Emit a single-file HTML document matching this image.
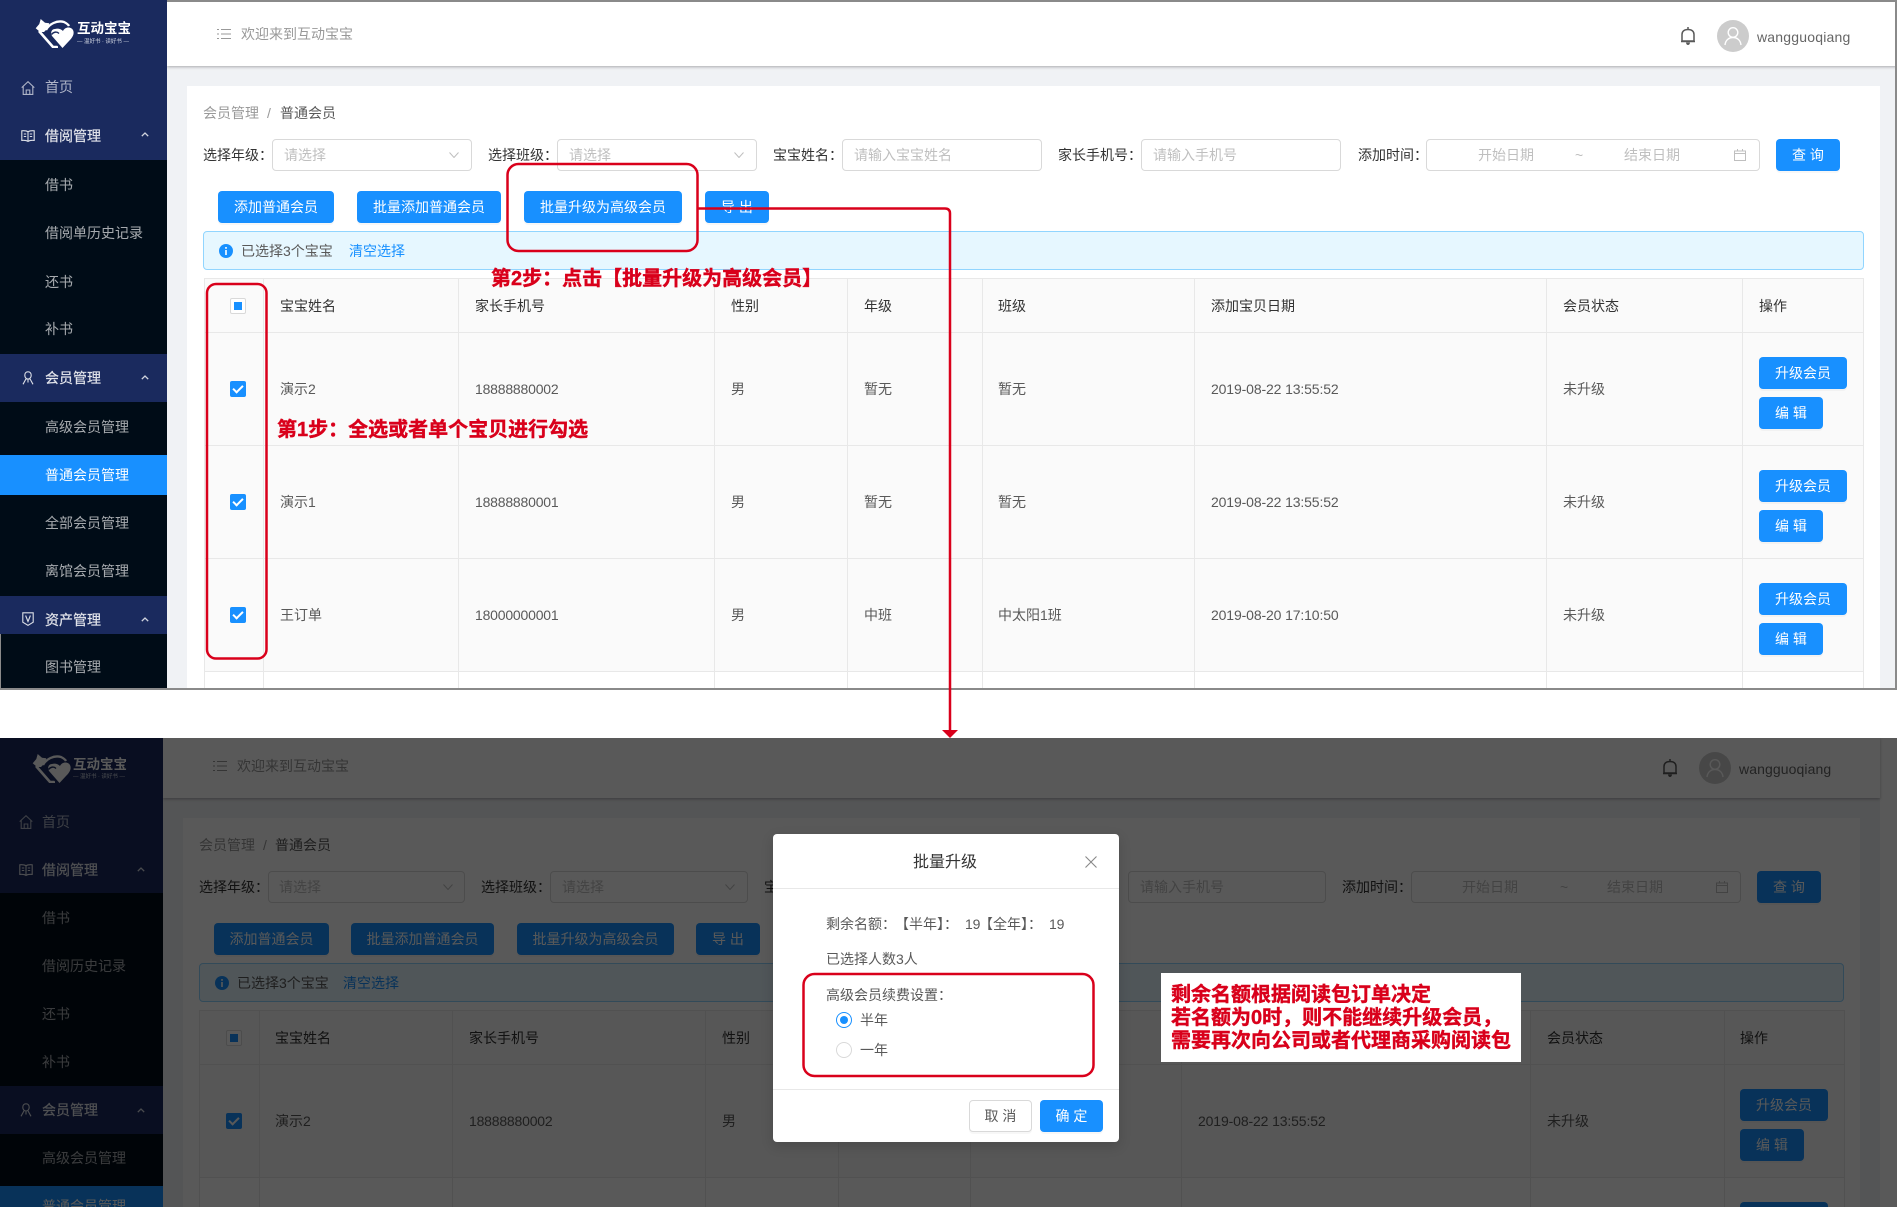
<!DOCTYPE html>
<html lang="zh">
<head>
<meta charset="utf-8">
<title>批量升级</title>
<style>
html,body{margin:0;padding:0;background:#fff}
body{position:relative;width:1897px;height:1207px;overflow:hidden;font:14px/20px "Liberation Sans","Noto Sans CJK SC",sans-serif;color:#595959}
.s{position:absolute;overflow:hidden;left:0;width:1897px}
.i{position:absolute;left:0;width:1897px;height:1207px}
.a{position:absolute}
.t{position:absolute;white-space:nowrap;line-height:20px;font-size:14px}
.m{color:rgba(255,255,255,.65)}
.w{color:rgba(255,255,255,.85);-webkit-text-stroke:.2px rgba(255,255,255,.85)}
.d{color:#333}
.g{color:#bfbfbf}
.n{color:#999}
.l{color:#1890ff}
.x{letter-spacing:-.2px}
.y{letter-spacing:-.13px}
.b{position:absolute;height:32px;line-height:32px;background:#1890ff;color:#fff;border-radius:4px;text-align:center;font-size:14px;white-space:nowrap;box-shadow:0 2px 0 rgba(0,0,0,.03)}
.f{position:absolute;height:30px;border:1px solid #d9d9d9;border-radius:4px;background:#fff}
.v{position:absolute;width:1px;background:#e8e8e8}
.h{position:absolute;height:1px;background:#e8e8e8}
.c{position:absolute;width:16px;height:16px;background:#1890ff;border-radius:2px}
.c:after{content:"";position:absolute;left:5px;top:2px;width:4px;height:8px;border:solid #fff;border-width:0 2px 2px 0;transform:rotate(45deg)}
.q{position:absolute;width:14px;height:14px;border:1px solid #d9d9d9;border-radius:2px;background:#fff}
.q:after{content:"";position:absolute;left:3px;top:3px;width:8px;height:8px;background:#1890ff}
.r{position:absolute;color:#d9001b;font-weight:700;font-size:20px;line-height:23px;white-space:nowrap;-webkit-text-stroke:.4px #d9001b}
svg{position:absolute;overflow:visible}
.ic{fill:none;stroke:currentColor;stroke-width:1.1}
</style>
</head>
<body>
<svg width="0" height="0" style="left:0;top:0">
<symbol id="logo" viewBox="0 0 41 31"><path fill="#fff" d="M.7 11.300 4.300 7 5.700 2 10 5.700l4.300.6L13 11 9 15 5 15Z"/><path fill="none" stroke="#fff" stroke-width="2.300" d="M11 13C14 7 22 3 29 5c2 1 4 2 5 4"/><path fill="none" stroke="#fff" stroke-width="2.600" d="M4 14 18 30h5"/><path fill="#fff" d="M28 14C30 9.500 36 9.500 38 13c2 4-1 8-4 11l-6.500 7L17 19c-2-4 0-7 3-7 3-1 6 0 8 2Z"/><path fill="none" stroke="#1a2a5e" stroke-width="1.400" d="M16.500 17.500c2.500-3 5.500-3 7.500-1M18 23l6 6.500"/></symbol>
<symbol id="home" viewBox="0 0 14 14"><path class="ic" d="M.7 6.600 7 .7l6.300 5.900M2.200 5.400v8h9.600v-8M5.200 13.400V9h3.600v4.400"/></symbol>
<symbol id="book" viewBox="0 0 14 14"><path class="ic" d="M7 2.800C5.400 1.700 3 1.600.8 1.800v9.600c2.200-.2 4.600-.1 6.200 1 1.600-1.100 4-1.200 6.200-1V1.800C11 1.600 8.600 1.700 7 2.800ZM7 2.800v9.600M2.800 5h2.400M2.800 7.500h2.400M8.800 5h2.400M8.800 7.500h2.400"/></symbol>
<symbol id="user" viewBox="0 0 14 14"><path class="ic" d="M7 .8c2 0 3.200 1.500 3.200 3.400S9 8 7 8 3.800 6.100 3.800 4.200 5 .8 7 .8ZM5.200 7.500 2 13.300M8.800 7.500l3.200 5.800M7 8v3.500"/></symbol>
<symbol id="shield" viewBox="0 0 14 14"><path class="ic" d="M1.800.8h10.400v9.400L7 13.300 1.800 10.200ZM4.600 3.500 7 9.500l2.400-6"/></symbol>
<symbol id="up" viewBox="0 0 10 6"><path fill="none" stroke="currentColor" stroke-width="1.600" d="M1 5 5 1.200 9 5"/></symbol>
<symbol id="down" viewBox="0 0 10 6"><path fill="none" stroke="currentColor" stroke-width="1" d="M.5.500 5 5.500 9.500.500"/></symbol>
<symbol id="list" viewBox="0 0 14 14"><path fill="none" stroke="currentColor" stroke-width="1.100" d="M0 2.500h2M4 2.500h10M0 7h2M4 7h10M0 11.500h2M4 11.500h10"/></symbol>
<symbol id="bell" viewBox="0 0 14 18"><path fill="none" stroke="currentColor" stroke-width="1.500" d="M1 14V7.500C1 4.200 3.500 2.500 7 2.500S13 4.200 13 7.500V14ZM0 14.500h14M7 0v2.500"/><path fill="currentColor" d="M5 15.500h4C9 17 8 18 7 18S5 17 5 15.500Z"/></symbol>
<symbol id="cal" viewBox="0 0 12 12"><path fill="none" stroke="currentColor" stroke-width="1" d="M.5 2h11v9.500H.5ZM.5 4.500h11M3.500 0v2.500M8.500 0v2.500"/></symbol>
<symbol id="info" viewBox="0 0 14 14"><circle cx="7" cy="7" r="7" fill="#1890ff"/><rect x="6.200" y="6" width="1.600" height="5" fill="#fff"/><rect x="6.200" y="3" width="1.600" height="1.800" fill="#fff"/></symbol>
<symbol id="avatar" viewBox="0 0 32 32"><circle cx="16" cy="16" r="16" fill="#ccc"/><circle cx="16" cy="12.500" r="4.800" fill="none" stroke="#fff" stroke-width="1.400"/><path fill="none" stroke="#fff" stroke-width="1.400" d="M8 25c.5-5 4-7.500 8-7.500s7.500 2.500 8 7.500"/></symbol>
</svg>

<!-- TOP SCREEN -->
<div class="s" style="top:0;height:690px;background:#f0f2f5">
<div class="i" style="top:0">
<div class="a" style="left:167px;top:0;width:1730px;height:66px;background:#fff;box-shadow:0 1px 3px rgba(0,0,0,.3)"></div>
<div class="a" style="left:187px;top:86px;width:1693px;height:604px;background:#fff"></div>

<svg style="left:217px;top:27px;color:#999" width="14" height="14"><use href="#list"/></svg>
<div class="t n" style="left:241px;top:24px">欢迎来到互动宝宝</div>
<svg style="left:1681px;top:27px;color:#595959" width="14" height="18"><use href="#bell"/></svg>
<svg style="left:1717px;top:20px" width="32" height="32"><use href="#avatar"/></svg>
<div class="t" style="left:1757px;top:27px;letter-spacing:.2px;color:#666">wangguoqiang</div>

<!-- sidebar -->
<div class="a" style="left:0;top:0;width:167px;height:690px;background:#1a2a5e"></div>
<div class="a" style="left:0;top:160px;width:167px;height:194px;background:#000c17"></div>
<div class="a" style="left:0;top:402px;width:167px;height:194px;background:#000c17"></div>
<div class="a" style="left:0;top:455px;width:167px;height:40px;background:#1890ff"></div>
<div class="a" style="left:0;top:634px;width:167px;height:56px;background:#000c17"></div>
<svg style="left:35px;top:17px" width="41" height="31"><use href="#logo"/></svg>
<div class="t" style="left:77px;top:19px;color:#fff;font-size:13.500px;font-weight:700">互动宝宝</div>
<div class="t" style="left:77px;top:32px;color:#cfd4e0;font-size:5.500px">— 温好书 · 读好书 —</div>
<svg style="left:21px;top:81px;color:rgba(255,255,255,.65)" width="14" height="14"><use href="#home"/></svg>
<svg style="left:21px;top:129px;color:rgba(255,255,255,.85)" width="14" height="14"><use href="#book"/></svg>
<svg style="left:21px;top:371px;color:rgba(255,255,255,.85)" width="14" height="14"><use href="#user"/></svg>
<svg style="left:21px;top:612px;color:rgba(255,255,255,.85)" width="14" height="14"><use href="#shield"/></svg>
<svg style="left:141px;top:132px;color:rgba(255,255,255,.8)" width="8" height="5"><use href="#up"/></svg>
<svg style="left:141px;top:375px;color:rgba(255,255,255,.8)" width="8" height="5"><use href="#up"/></svg>
<svg style="left:141px;top:617px;color:rgba(255,255,255,.8)" width="8" height="5"><use href="#up"/></svg>
<div class="t m" style="left:45px;top:77px">首页</div>
<div class="t w" style="left:45px;top:126px">借阅管理</div>
<div class="t m" style="left:45px;top:175px">借书</div>
<div class="t m" style="left:45px;top:223px">借阅单历史记录</div>
<div class="t m" style="left:45px;top:272px">还书</div>
<div class="t m" style="left:45px;top:319px">补书</div>
<div class="t w" style="left:45px;top:368px">会员管理</div>
<div class="t m" style="left:45px;top:417px">高级会员管理</div>
<div class="t" style="left:45px;top:465px;color:#fff">普通会员管理</div>
<div class="t m" style="left:45px;top:513px">全部会员管理</div>
<div class="t m" style="left:45px;top:561px">离馆会员管理</div>
<div class="t w" style="left:45px;top:610px">资产管理</div>
<div class="t m" style="left:45px;top:657px">图书管理</div>

<!-- filters -->
<div class="t n" style="left:203px;top:103px">会员管理</div>
<div class="t n" style="left:267px;top:103px">/</div>
<div class="t" style="left:280px;top:103px">普通会员</div>
<div class="t d" style="left:203px;top:145px">选择年级：</div>
<div class="f" style="left:272px;top:139px;width:198px"></div>
<div class="t g" style="left:284px;top:145px">请选择</div>
<svg style="left:449px;top:152px;color:#bfbfbf" width="10" height="6"><use href="#down"/></svg>
<div class="t d" style="left:488px;top:145px">选择班级：</div>
<div class="f" style="left:557px;top:139px;width:198px"></div>
<div class="t g" style="left:569px;top:145px">请选择</div>
<svg style="left:734px;top:152px;color:#bfbfbf" width="10" height="6"><use href="#down"/></svg>
<div class="t d" style="left:773px;top:145px">宝宝姓名：</div>
<div class="f" style="left:842px;top:139px;width:198px"></div>
<div class="t g" style="left:854px;top:145px">请输入宝宝姓名</div>
<div class="t d" style="left:1058px;top:145px">家长手机号：</div>
<div class="f" style="left:1141px;top:139px;width:198px"></div>
<div class="t g" style="left:1153px;top:145px">请输入手机号</div>
<div class="t d" style="left:1358px;top:145px">添加时间：</div>
<div class="f" style="left:1426px;top:139px;width:332px"></div>
<div class="t g" style="left:1478px;top:145px">开始日期</div>
<div class="t g" style="left:1575px;top:145px">~</div>
<div class="t g" style="left:1624px;top:145px">结束日期</div>
<svg style="left:1734px;top:149px;color:#bfbfbf" width="12" height="12"><use href="#cal"/></svg>
<div class="b" style="left:1776px;top:139px;width:64px">查 询</div>

<div class="b" style="left:218px;top:191px;width:116px">添加普通会员</div>
<div class="b" style="left:357px;top:191px;width:144px">批量添加普通会员</div>
<div class="b" style="left:524px;top:191px;width:158px">批量升级为高级会员</div>
<div class="b" style="left:705px;top:191px;width:64px">导 出</div>

<div class="a" style="left:203px;top:231px;width:1659px;height:37px;background:#e6f7ff;border:1px solid #91d5ff;border-radius:4px"></div>
<svg style="left:219px;top:244px" width="14" height="14"><use href="#info"/></svg>
<div class="t" style="left:241px;top:241px">已选择3个宝宝</div>
<div class="t l" style="left:349px;top:241px">清空选择</div>

<!-- table -->
<div class="a" style="left:204px;top:278px;width:1660px;height:393px;background:#fafafa"></div>
<div class="h" style="left:204px;top:278px;width:1660px"></div>
<div class="h" style="left:204px;top:332px;width:1660px"></div>
<div class="h" style="left:204px;top:445px;width:1660px"></div>
<div class="h" style="left:204px;top:558px;width:1660px"></div>
<div class="h" style="left:204px;top:671px;width:1660px"></div>
<div class="v" style="left:204px;top:278px;height:412px"></div>
<div class="v" style="left:263px;top:278px;height:412px"></div>
<div class="v" style="left:458px;top:278px;height:412px"></div>
<div class="v" style="left:714px;top:278px;height:412px"></div>
<div class="v" style="left:847px;top:278px;height:412px"></div>
<div class="v" style="left:982px;top:278px;height:412px"></div>
<div class="v" style="left:1194px;top:278px;height:412px"></div>
<div class="v" style="left:1546px;top:278px;height:412px"></div>
<div class="v" style="left:1742px;top:278px;height:412px"></div>
<div class="v" style="left:1863px;top:278px;height:412px"></div>

<div class="q" style="left:230px;top:298px"></div>
<div class="t d" style="left:280px;top:296px">宝宝姓名</div>
<div class="t d" style="left:475px;top:296px">家长手机号</div>
<div class="t d" style="left:731px;top:296px">性别</div>
<div class="t d" style="left:864px;top:296px">年级</div>
<div class="t d" style="left:998px;top:296px">班级</div>
<div class="t d" style="left:1211px;top:296px">添加宝贝日期</div>
<div class="t d" style="left:1563px;top:296px">会员状态</div>
<div class="t d" style="left:1759px;top:296px">操作</div>

<div class="c" style="left:230px;top:381px"></div>
<div class="t" style="left:280px;top:379px">演示2</div>
<div class="t x" style="left:475px;top:379px">18888880002</div>
<div class="t" style="left:731px;top:379px">男</div>
<div class="t" style="left:864px;top:379px">暂无</div>
<div class="t" style="left:998px;top:379px">暂无</div>
<div class="t y" style="left:1211px;top:379px">2019-08-22 13:55:52</div>
<div class="t" style="left:1563px;top:379px">未升级</div>
<div class="b" style="left:1759px;top:357px;width:88px">升级会员</div>
<div class="b" style="left:1759px;top:397px;width:64px">编 辑</div>

<div class="c" style="left:230px;top:494px"></div>
<div class="t" style="left:280px;top:492px">演示1</div>
<div class="t x" style="left:475px;top:492px">18888880001</div>
<div class="t" style="left:731px;top:492px">男</div>
<div class="t" style="left:864px;top:492px">暂无</div>
<div class="t" style="left:998px;top:492px">暂无</div>
<div class="t y" style="left:1211px;top:492px">2019-08-22 13:55:52</div>
<div class="t" style="left:1563px;top:492px">未升级</div>
<div class="b" style="left:1759px;top:470px;width:88px">升级会员</div>
<div class="b" style="left:1759px;top:510px;width:64px">编 辑</div>

<div class="c" style="left:230px;top:607px"></div>
<div class="t" style="left:280px;top:605px">王订单</div>
<div class="t x" style="left:475px;top:605px">18000000001</div>
<div class="t" style="left:731px;top:605px">男</div>
<div class="t" style="left:864px;top:605px">中班</div>
<div class="t" style="left:998px;top:605px">中太阳1班</div>
<div class="t y" style="left:1211px;top:605px">2019-08-20 17:10:50</div>
<div class="t" style="left:1563px;top:605px">未升级</div>
<div class="b" style="left:1759px;top:583px;width:88px">升级会员</div>
<div class="b" style="left:1759px;top:623px;width:64px">编 辑</div>

<!-- window frame -->
<div class="a" style="left:167px;top:0;width:1730px;height:2px;background:#8a8a8a"></div>
<div class="a" style="left:1895px;top:0;width:2px;height:690px;background:#8a8a8a"></div>
<div class="a" style="left:0;top:688px;width:1897px;height:2px;background:#8a8a8a"></div>
<div class="a" style="left:0;top:634px;width:1px;height:56px;background:#8a8a8a"></div>
</div>
</div>

<!-- BOTTOM SCREEN -->
<div class="s" style="top:738px;height:469px">
<div class="i" style="top:-738px">
<div class="a" style="left:163px;top:738px;width:1717px;height:469px;background:#f0f2f5"></div>
<div class="a" style="left:163px;top:738px;width:1717px;height:60px;background:#fff;box-shadow:0 1px 3px rgba(0,0,0,.3)"></div>
<div class="a" style="left:183px;top:818px;width:1677px;height:389px;background:#fff"></div>

<svg style="left:213px;top:759px;color:#999" width="14" height="14"><use href="#list"/></svg>
<div class="t n" style="left:237px;top:756px">欢迎来到互动宝宝</div>
<svg style="left:1663px;top:759px;color:#595959" width="14" height="18"><use href="#bell"/></svg>
<svg style="left:1699px;top:752px" width="32" height="32"><use href="#avatar"/></svg>
<div class="t" style="left:1739px;top:759px;letter-spacing:.1px;color:#666">wangguoqiang</div>

<div class="a" style="left:0;top:738px;width:163px;height:469px;background:#1a2a5e"></div>
<div class="a" style="left:0;top:893px;width:163px;height:193px;background:#000c17"></div>
<div class="a" style="left:0;top:1134px;width:163px;height:73px;background:#000c17"></div>
<div class="a" style="left:0;top:1186px;width:163px;height:21px;background:#1890ff"></div>
<svg style="left:32px;top:752px" width="41" height="31"><use href="#logo"/></svg>
<div class="t" style="left:73px;top:755px;color:#fff;font-size:13.500px;font-weight:700">互动宝宝</div>
<div class="t" style="left:73px;top:767px;color:#cfd4e0;font-size:5.500px">— 温好书 · 读好书 —</div>
<svg style="left:19px;top:815px;color:rgba(255,255,255,.65)" width="14" height="14"><use href="#home"/></svg>
<svg style="left:19px;top:863px;color:rgba(255,255,255,.85)" width="14" height="14"><use href="#book"/></svg>
<svg style="left:19px;top:1103px;color:rgba(255,255,255,.85)" width="14" height="14"><use href="#user"/></svg>
<svg style="left:137px;top:867px;color:rgba(255,255,255,.8)" width="8" height="5"><use href="#up"/></svg>
<svg style="left:137px;top:1108px;color:rgba(255,255,255,.8)" width="8" height="5"><use href="#up"/></svg>
<div class="t m" style="left:42px;top:812px">首页</div>
<div class="t w" style="left:42px;top:860px">借阅管理</div>
<div class="t m" style="left:42px;top:908px">借书</div>
<div class="t m" style="left:42px;top:956px">借阅历史记录</div>
<div class="t m" style="left:42px;top:1004px">还书</div>
<div class="t m" style="left:42px;top:1052px">补书</div>
<div class="t w" style="left:42px;top:1100px">会员管理</div>
<div class="t m" style="left:42px;top:1148px">高级会员管理</div>
<div class="t" style="left:42px;top:1196px;color:#fff">普通会员管理</div>

<div class="t n" style="left:199px;top:835px">会员管理</div>
<div class="t n" style="left:263px;top:835px">/</div>
<div class="t" style="left:275px;top:835px">普通会员</div>
<div class="t d" style="left:199px;top:877px">选择年级：</div>
<div class="f" style="left:268px;top:871px;width:195px"></div>
<div class="t g" style="left:279px;top:877px">请选择</div>
<svg style="left:443px;top:884px;color:#bfbfbf" width="10" height="6"><use href="#down"/></svg>
<div class="t d" style="left:481px;top:877px">选择班级：</div>
<div class="f" style="left:550px;top:871px;width:196px"></div>
<div class="t g" style="left:562px;top:877px">请选择</div>
<svg style="left:725px;top:884px;color:#bfbfbf" width="10" height="6"><use href="#down"/></svg>
<div class="t d" style="left:764px;top:877px">宝宝姓名：</div>
<div class="f" style="left:1128px;top:871px;width:196px"></div>
<div class="t g" style="left:1140px;top:877px">请输入手机号</div>
<div class="t d" style="left:1342px;top:877px">添加时间：</div>
<div class="f" style="left:1411px;top:871px;width:328px"></div>
<div class="t g" style="left:1462px;top:877px">开始日期</div>
<div class="t g" style="left:1560px;top:877px">~</div>
<div class="t g" style="left:1607px;top:877px">结束日期</div>
<svg style="left:1716px;top:881px;color:#bfbfbf" width="12" height="12"><use href="#cal"/></svg>
<div class="b" style="left:1757px;top:871px;width:64px">查 询</div>

<div class="b" style="left:214px;top:923px;width:115px">添加普通会员</div>
<div class="b" style="left:351px;top:923px;width:143px">批量添加普通会员</div>
<div class="b" style="left:517px;top:923px;width:157px">批量升级为高级会员</div>
<div class="b" style="left:696px;top:923px;width:64px">导 出</div>

<div class="a" style="left:199px;top:963px;width:1643px;height:37px;background:#e6f7ff;border:1px solid #91d5ff;border-radius:4px"></div>
<svg style="left:215px;top:976px" width="14" height="14"><use href="#info"/></svg>
<div class="t" style="left:237px;top:973px">已选择3个宝宝</div>
<div class="t l" style="left:343px;top:973px">清空选择</div>

<div class="a" style="left:199px;top:1010px;width:1645px;height:167px;background:#fafafa"></div>
<div class="h" style="left:199px;top:1010px;width:1645px"></div>
<div class="h" style="left:199px;top:1064px;width:1645px"></div>
<div class="h" style="left:199px;top:1177px;width:1645px"></div>
<div class="v" style="left:199px;top:1010px;height:197px"></div>
<div class="v" style="left:259px;top:1010px;height:197px"></div>
<div class="v" style="left:452px;top:1010px;height:197px"></div>
<div class="v" style="left:705px;top:1010px;height:197px"></div>
<div class="v" style="left:838px;top:1010px;height:197px"></div>
<div class="v" style="left:970px;top:1010px;height:197px"></div>
<div class="v" style="left:1181px;top:1010px;height:197px"></div>
<div class="v" style="left:1530px;top:1010px;height:197px"></div>
<div class="v" style="left:1724px;top:1010px;height:197px"></div>
<div class="v" style="left:1844px;top:1010px;height:197px"></div>

<div class="q" style="left:226px;top:1030px"></div>
<div class="t d" style="left:275px;top:1028px">宝宝姓名</div>
<div class="t d" style="left:469px;top:1028px">家长手机号</div>
<div class="t d" style="left:722px;top:1028px">性别</div>
<div class="t d" style="left:1547px;top:1028px">会员状态</div>
<div class="t d" style="left:1740px;top:1028px">操作</div>
<div class="c" style="left:226px;top:1113px"></div>
<div class="t" style="left:275px;top:1111px">演示2</div>
<div class="t x" style="left:469px;top:1111px">18888880002</div>
<div class="t" style="left:722px;top:1111px">男</div>
<div class="t y" style="left:1198px;top:1111px">2019-08-22 13:55:52</div>
<div class="t" style="left:1547px;top:1111px">未升级</div>
<div class="b" style="left:1740px;top:1089px;width:88px">升级会员</div>
<div class="b" style="left:1740px;top:1129px;width:64px">编 辑</div>
<div class="b" style="left:1740px;top:1202px;width:88px">升级会员</div>

<!-- mask -->
<div class="a" style="left:0;top:738px;width:1897px;height:469px;background:rgba(0,0,0,.65)"></div>

<!-- modal -->
<div class="a" style="left:773px;top:834px;width:346px;height:308px;background:#fff;border-radius:4px;box-shadow:0 4px 12px rgba(0,0,0,.15)"></div>
<div class="t d" style="left:913px;top:853px;font-size:16px">批量升级</div>
<svg style="left:1085px;top:856px;color:#888" width="12" height="12"><path d="M.5.500 11.500 11.500M11.500.500.500 11.500" stroke="currentColor" stroke-width="1.100" fill="none"/></svg>
<div class="h" style="left:773px;top:888px;width:346px"></div>
<div class="t" style="left:826px;top:914px">剩余名额：</div>
<div class="t" style="left:895px;top:914px">【半年】：</div>
<div class="t y" style="left:965px;top:914px">19</div>
<div class="t" style="left:979px;top:914px">【全年】：</div>
<div class="t y" style="left:1049px;top:914px">19</div>
<div class="t" style="left:826px;top:949px">已选择人数3人</div>
<div class="t" style="left:826px;top:985px">高级会员续费设置：</div>
<div class="a" style="left:836px;top:1012px;width:14px;height:14px;border:1px solid #1890ff;border-radius:50%"></div>
<div class="a" style="left:840px;top:1016px;width:8px;height:8px;background:#1890ff;border-radius:50%"></div>
<div class="t" style="left:860px;top:1010px">半年</div>
<div class="a" style="left:836px;top:1042px;width:14px;height:14px;border:1px solid #d9d9d9;border-radius:50%"></div>
<div class="t" style="left:860px;top:1040px">一年</div>
<div class="h" style="left:773px;top:1089px;width:346px"></div>
<div class="a" style="left:969px;top:1100px;width:61px;height:30px;border:1px solid #d9d9d9;border-radius:4px;background:#fff;text-align:center;line-height:30px;box-shadow:0 2px 0 rgba(0,0,0,.03)">取 消</div>
<div class="b" style="left:1040px;top:1100px;width:63px">确 定</div>

<div class="a" style="left:1161px;top:973px;width:360px;height:89px;background:#fff"></div>
<div class="r" style="left:1171px;top:984px">剩余名额根据阅读包订单决定<br>若名额为0时，则不能继续升级会员，<br>需要再次向公司或者代理商采购阅读包</div>
</div>
</div>

<!-- RED ANNOTATIONS -->
<div class="r" style="left:491px;top:268px">第2步：点击【批量升级为高级会员】</div>
<div class="r" style="left:277px;top:419px">第1步：全选或者单个宝贝进行勾选</div>
<svg style="left:0;top:0" width="1897" height="1207">
<rect x="507.500" y="164" width="190" height="87" rx="11" fill="none" stroke="#d9001b" stroke-width="2.500"/>
<rect x="207" y="284" width="59.500" height="374.500" rx="9" fill="none" stroke="#d9001b" stroke-width="2.500"/>
<path d="M698 208.500H945Q950 208.500 950 213.500V732" fill="none" stroke="#d9001b" stroke-width="2.500"/>
<path d="M942 730H958L950 738Z" fill="#d9001b"/>
<rect x="803.500" y="974" width="290" height="102" rx="11" fill="none" stroke="#d9001b" stroke-width="2.500"/>
</svg>
</body>
</html>
